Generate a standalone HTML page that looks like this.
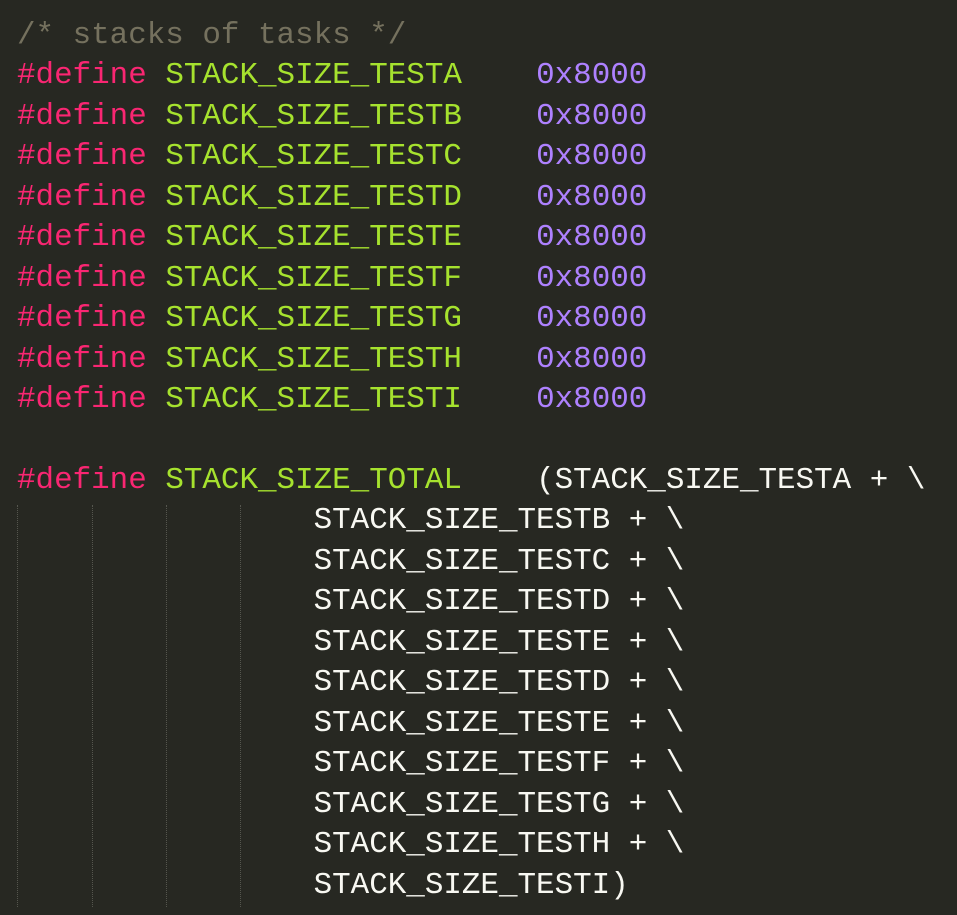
<!DOCTYPE html>
<html><head><meta charset="utf-8"><style>
html,body{margin:0;padding:0;background:#272822;width:957px;height:915px;overflow:hidden}
pre{margin:0;position:absolute;left:17px;top:16px;font-family:"Liberation Mono",monospace;font-size:30.9px;line-height:40.45px;color:#F8F8F2;white-space:pre}
.c{color:#75715E}.k{color:#F92672}.g{color:#A6E22E}.n{color:#AE81FF}
.guide{position:absolute;top:505px;height:402px;width:0;border-left:1px dotted #55564e}
</style></head><body>
<div class="guide" style="left:17px"></div>
<div class="guide" style="left:92px"></div>
<div class="guide" style="left:166px"></div>
<div class="guide" style="left:240px"></div>
<pre><span class="c">/* stacks of tasks */</span>
<span class="k">#define</span> <span class="g">STACK_SIZE_TESTA</span>    <span class="n">0x8000</span>
<span class="k">#define</span> <span class="g">STACK_SIZE_TESTB</span>    <span class="n">0x8000</span>
<span class="k">#define</span> <span class="g">STACK_SIZE_TESTC</span>    <span class="n">0x8000</span>
<span class="k">#define</span> <span class="g">STACK_SIZE_TESTD</span>    <span class="n">0x8000</span>
<span class="k">#define</span> <span class="g">STACK_SIZE_TESTE</span>    <span class="n">0x8000</span>
<span class="k">#define</span> <span class="g">STACK_SIZE_TESTF</span>    <span class="n">0x8000</span>
<span class="k">#define</span> <span class="g">STACK_SIZE_TESTG</span>    <span class="n">0x8000</span>
<span class="k">#define</span> <span class="g">STACK_SIZE_TESTH</span>    <span class="n">0x8000</span>
<span class="k">#define</span> <span class="g">STACK_SIZE_TESTI</span>    <span class="n">0x8000</span>

<span class="k">#define</span> <span class="g">STACK_SIZE_TOTAL</span>    (STACK_SIZE_TESTA + \
                STACK_SIZE_TESTB + \
                STACK_SIZE_TESTC + \
                STACK_SIZE_TESTD + \
                STACK_SIZE_TESTE + \
                STACK_SIZE_TESTD + \
                STACK_SIZE_TESTE + \
                STACK_SIZE_TESTF + \
                STACK_SIZE_TESTG + \
                STACK_SIZE_TESTH + \
                STACK_SIZE_TESTI)</pre>
</body></html>
